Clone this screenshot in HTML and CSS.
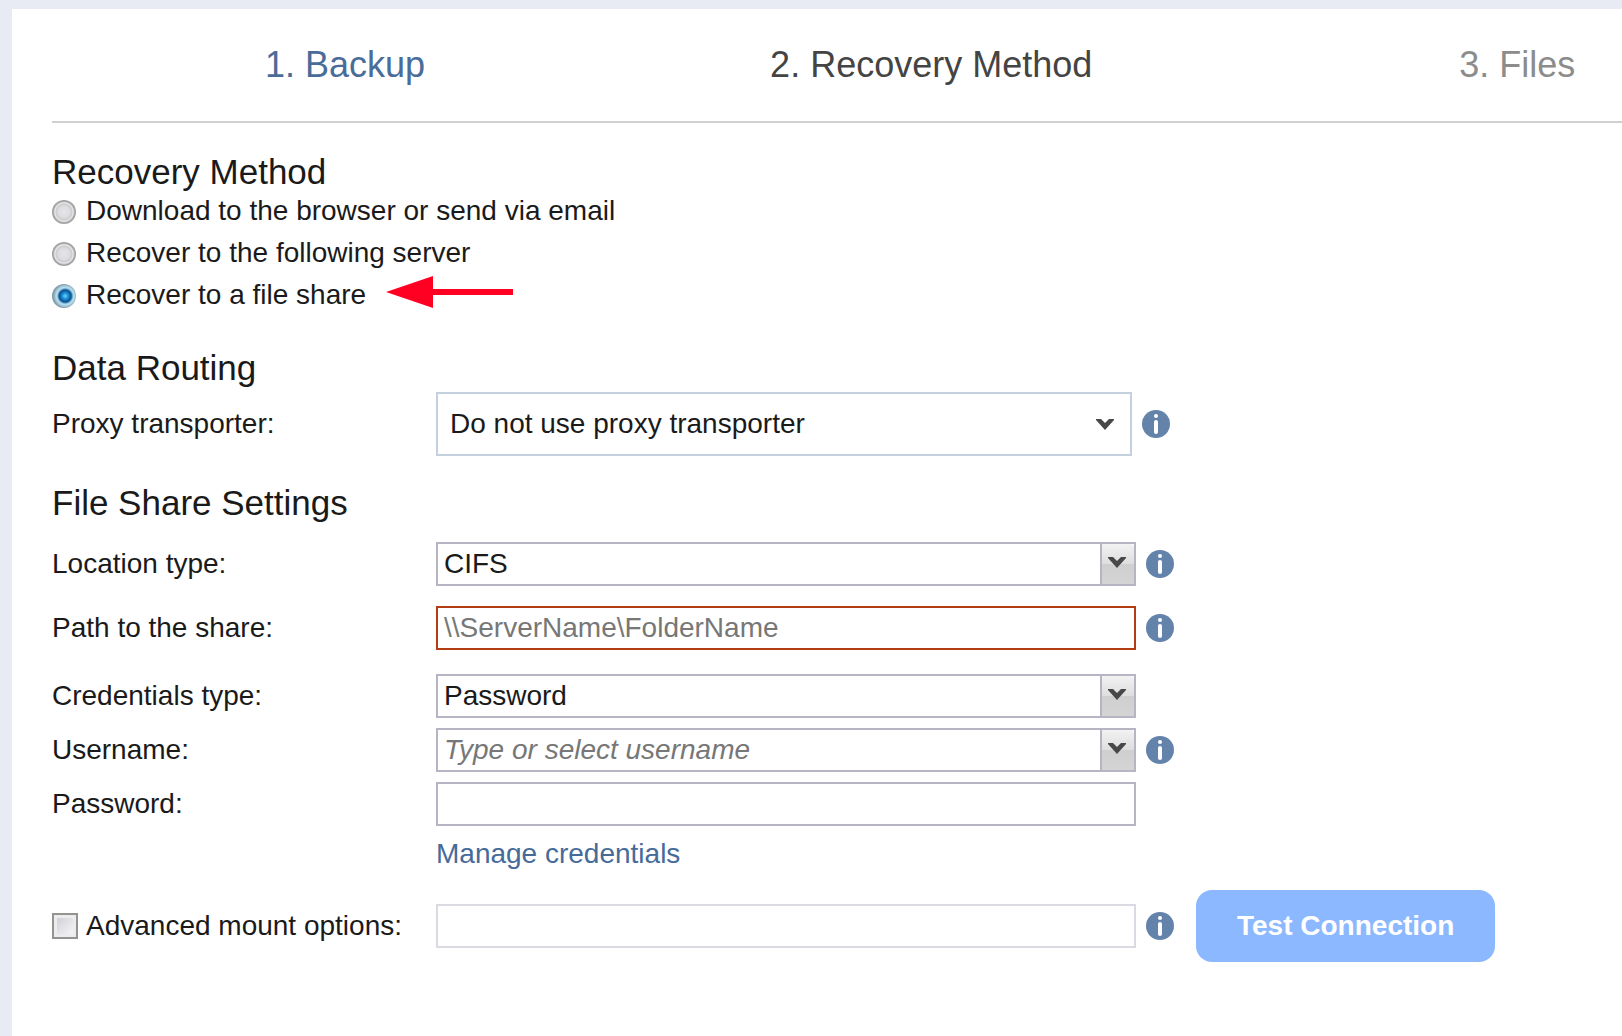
FILE: index.html
```html
<!DOCTYPE html>
<html lang="en">
<head>
  <meta charset="UTF-8">
  <meta name="viewport" content="width=device-width, initial-scale=1">
  <title>Recovery Method</title>
  <link rel="stylesheet" href="styles.css">
</head>
<body>
  <!-- shared icons -->
  <svg class="sprite" aria-hidden="true">
    <symbol id="icon-info" viewBox="0 0 28 28">
      <circle cx="14" cy="14" r="14" fill="#6483ab"/>
      <circle cx="14" cy="6" r="2" fill="#fff"/>
      <rect x="12" y="10" width="4" height="14" rx="2" fill="#fff"/>
    </symbol>
    <symbol id="icon-caret" viewBox="0 0 18 11">
      <path d="M0 0h5l4 4 4-4h5v1L9 11 0 1z" fill="#484848"/>
    </symbol>
  </svg>

  <main class="wizard">
    <nav class="steps">
      <a href="#backup" class="step done">1. Backup</a>
      <span class="step current">2. Recovery Method</span>
      <span class="step">3. Files</span>
    </nav>

    <form class="form">
      <h2>Recovery Method</h2>
      <div class="option">
        <input type="radio" name="method" id="methodDownload">
        <label for="methodDownload">Download to the browser or send via email</label>
      </div>
      <div class="option">
        <input type="radio" name="method" id="methodServer">
        <label for="methodServer">Recover to the following server</label>
      </div>
      <div class="option">
        <input type="radio" name="method" id="methodShare" checked>
        <label for="methodShare">Recover to a file share</label>
        <svg class="pointer" viewBox="0 0 127 32" aria-hidden="true">
          <path d="M0 16L47 0v13h80v6H47v13z" fill="#ff0022"/>
        </svg>
      </div>

      <h2 class="routing-title">Data Routing</h2>
      <div class="row routing">
        <label class="name" for="proxy">Proxy transporter:</label>
        <div class="control">
          <select id="proxy">
            <option>Do not use proxy transporter</option>
          </select>
          <span class="caret"><svg><use href="#icon-caret"/></svg></span>
        </div>
        <svg class="info"><use href="#icon-info"/></svg>
      </div>

      <h2 class="share-title">File Share Settings</h2>
      <div class="row">
        <label class="name" for="location">Location type:</label>
        <div class="control">
          <select id="location">
            <option>CIFS</option>
            <option>NFS</option>
          </select>
          <span class="trigger"><svg><use href="#icon-caret"/></svg></span>
        </div>
        <svg class="info"><use href="#icon-info"/></svg>
      </div>
      <div class="row path">
        <label class="name" for="path">Path to the share:</label>
        <div class="control invalid">
          <input type="text" id="path" placeholder="\\ServerName\FolderName">
        </div>
        <svg class="info"><use href="#icon-info"/></svg>
      </div>
      <div class="row credentials">
        <label class="name" for="credentials">Credentials type:</label>
        <div class="control">
          <select id="credentials">
            <option>Password</option>
            <option>Private key</option>
          </select>
          <span class="trigger"><svg><use href="#icon-caret"/></svg></span>
        </div>
      </div>
      <div class="row tight">
        <label class="name" for="username">Username:</label>
        <div class="control">
          <input type="text" id="username" class="hinted" placeholder="Type or select username">
          <button type="button" class="trigger" aria-label="Select username"><svg><use href="#icon-caret"/></svg></button>
        </div>
        <svg class="info"><use href="#icon-info"/></svg>
      </div>
      <div class="row tight">
        <label class="name" for="password">Password:</label>
        <div class="control">
          <input type="password" id="password">
        </div>
      </div>
      <div class="row manage">
        <span class="name"></span>
        <a href="#credentials" class="link">Manage credentials</a>
      </div>
      <div class="row advanced">
        <div class="name check">
          <input type="checkbox" id="advanced">
          <label for="advanced">Advanced mount options:</label>
        </div>
        <div class="control disabled">
          <input type="text" aria-label="Mount options" disabled>
        </div>
        <svg class="info"><use href="#icon-info"/></svg>
        <button type="button" class="test">Test Connection</button>
      </div>
    </form>
  </main>
</body>
</html>
```

FILE: styles.css
```css
* {
  margin: 0;
  padding: 0;
  box-sizing: border-box;
}
body {
  font-family: "Liberation Sans", Arial, sans-serif;
  font-size: 28px;
  line-height: 32px;
  color: #1a1a1a;
  background: #e8ebf4;
  overflow-x: hidden;
}
input, select, button {
  font: inherit;
  color: inherit;
}
a {
  color: #466b99;
  text-decoration: none;
}
.sprite {
  display: none;
}
.wizard {
  margin: 9px 0 0 12px;
  padding-left: 40px;
  min-height: calc(100vh - 9px);
  background: #fff;
  overflow: hidden;
}

/* wizard steps, the strip runs past the right edge */
.steps {
  display: grid;
  grid-template-columns: repeat(3, 1fr);
  width: 112%;
  padding: 36px 0;
  border-bottom: 2px solid #d0d0d0;
}
.step {
  font-size: 36px;
  line-height: 40px;
  text-align: center;
  color: #8c8c8c;
}
.step.done {
  color: #4a6c99;
}
.step.current {
  color: #444;
}

.form {
  padding: 31px 0 40px;
}
h2 {
  font-size: 35px;
  line-height: 36px;
  font-weight: normal;
}
.routing-title {
  margin: 34px 0 6px;
}
.share-title {
  margin: 29px 0 21px;
}

.option {
  display: flex;
  align-items: center;
  gap: 10px;
  height: 42px;
}
input[type="radio"] {
  appearance: none;
  width: 24px;
  height: 24px;
  margin-top: 2px;
  border-radius: 50%;
  background: radial-gradient(circle at 50% 50%, #e6e6ea 0, #dcdce0 6px, #cacace 8px, #ececec 9px, #a0a0a0 11px);
}
input[type="radio"]:checked {
  background: radial-gradient(circle at 55% 50%, #6fd4ff 0, #1c8fd6 3px, #0a4f8c 6px, #a4d4ec 8px, #b8dcec 9px, #7f9cac 12px);
}
.pointer {
  width: 127px;
  height: 32px;
  margin: 0 0 6px 10px;
}

.row {
  display: flex;
  align-items: center;
}
.row.path {
  margin-top: 20px;
}
.row.credentials {
  margin-top: 24px;
}
.row.tight {
  margin-top: 10px;
}
.row.manage {
  margin-top: 12px;
}
.row.advanced {
  margin-top: 20px;
}
.name {
  flex: 0 0 384px;
}
.control {
  position: relative;
  display: flex;
  flex: 0 1 700px;
  height: 44px;
  border: 2px solid #b5b5c3;
}
.control.invalid {
  border-color: #b23c14;
}
.control.disabled {
  border-color: #dadae2;
}
.control select,
.control input {
  flex: 1;
  min-width: 0;
  padding: 0 6px;
  border: none;
  outline: none;
  background: none;
  appearance: none;
}
.control input::placeholder {
  color: #777;
  opacity: 1;
}
.control .hinted::placeholder {
  font-style: italic;
}

/* arrows drawn over the right end of a field */
.trigger,
.caret {
  position: absolute;
  top: 0;
  right: 0;
  bottom: 0;
  display: flex;
  justify-content: center;
  pointer-events: none;
}
.trigger {
  width: 34px;
  padding: 13px 2px 0 0;
  border: solid #b5b5c3;
  border-width: 0 0 0 2px;
  border-radius: 0 4px 0 0;
  background: linear-gradient(#f2f2f2, #dedede 50%, #cfcfcf 50%, #d4d4d4);
}
button.trigger {
  pointer-events: auto;
}
.trigger svg,
.caret svg {
  width: 18px;
  height: 11px;
}
.caret {
  align-items: center;
  right: 16px;
}
.routing .control {
  flex-basis: 696px;
  height: 64px;
  border-color: #c5d0de;
}
.routing select {
  padding: 0 12px;
}

.info {
  flex: none;
  width: 28px;
  height: 28px;
  margin-left: 10px;
}
.check {
  display: flex;
  align-items: center;
  gap: 8px;
}
input[type="checkbox"] {
  appearance: none;
  width: 26px;
  height: 26px;
  border: 2px solid #939393;
  background: linear-gradient(135deg, #d0d0da, #f4f4f4) content-box, #ececec;
  padding: 3px;
}
.test {
  flex: none;
  height: 72px;
  margin-left: 22px;
  padding: 0 41px;
  border: none;
  border-radius: 16px;
  font-weight: bold;
  color: #fff;
  background: #8cb8ff;
}
```
